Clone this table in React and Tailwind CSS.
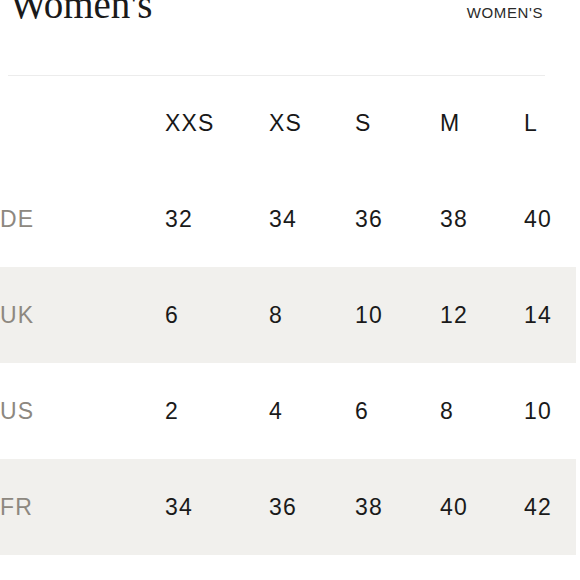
const sizes = ['XXS', 'XS', 'S', 'M', 'L'];

const rows = [
    { region: 'DE', values: ['32', '34', '36', '38', '40'] },
    { region: 'UK', values: ['6', '8', '10', '12', '14'] },
    { region: 'US', values: ['2', '4', '6', '8', '10'] },
    { region: 'FR', values: ['34', '36', '38', '40', '42'] },
];

const cols = 'grid grid-cols-[165px_104px_86px_85px_84px_1fr] items-center';

export default function App() {
    return (
        <div className="w-[580px] h-[580px] overflow-hidden bg-white font-['Liberation_Sans',Arial,sans-serif]">
            {/* title bar, page is scrolled a little */}
            <div className="h-[90px] -mt-[15px] flex items-baseline justify-between pl-[10px] pr-[37px]">
                <h1 className="font-['Liberation_Serif','Times_New_Roman',serif] text-[39px] leading-none text-[#1a1a1a]">Women's</h1>
                <span className="text-[15px] tracking-[0.04em] text-[#2a2a2a]">WOMEN'S</span>
            </div>
            <div className="ml-[8px] w-[537px] border-t border-[#ececec]" />

            <div className="w-[576px] text-[23px] tracking-[0.05em]">
                <div className={`${cols} h-[95px] text-[#181818]`}>
                    <div />
                    {sizes.map(s => <div key={s}>{s}</div>)}
                </div>
                {rows.map((r, i) => (
                    <div key={r.region} className={`${cols} h-[96px] ${i % 2 === 1 ? 'bg-[#f1f0ed]' : 'bg-white'}`}>
                        <div className="text-[#8d8880]">{r.region}</div>
                        {r.values.map((v, j) => <div key={j} className="text-[#1a1a1a]">{v}</div>)}
                    </div>
                ))}
            </div>
        </div>
    );
}
